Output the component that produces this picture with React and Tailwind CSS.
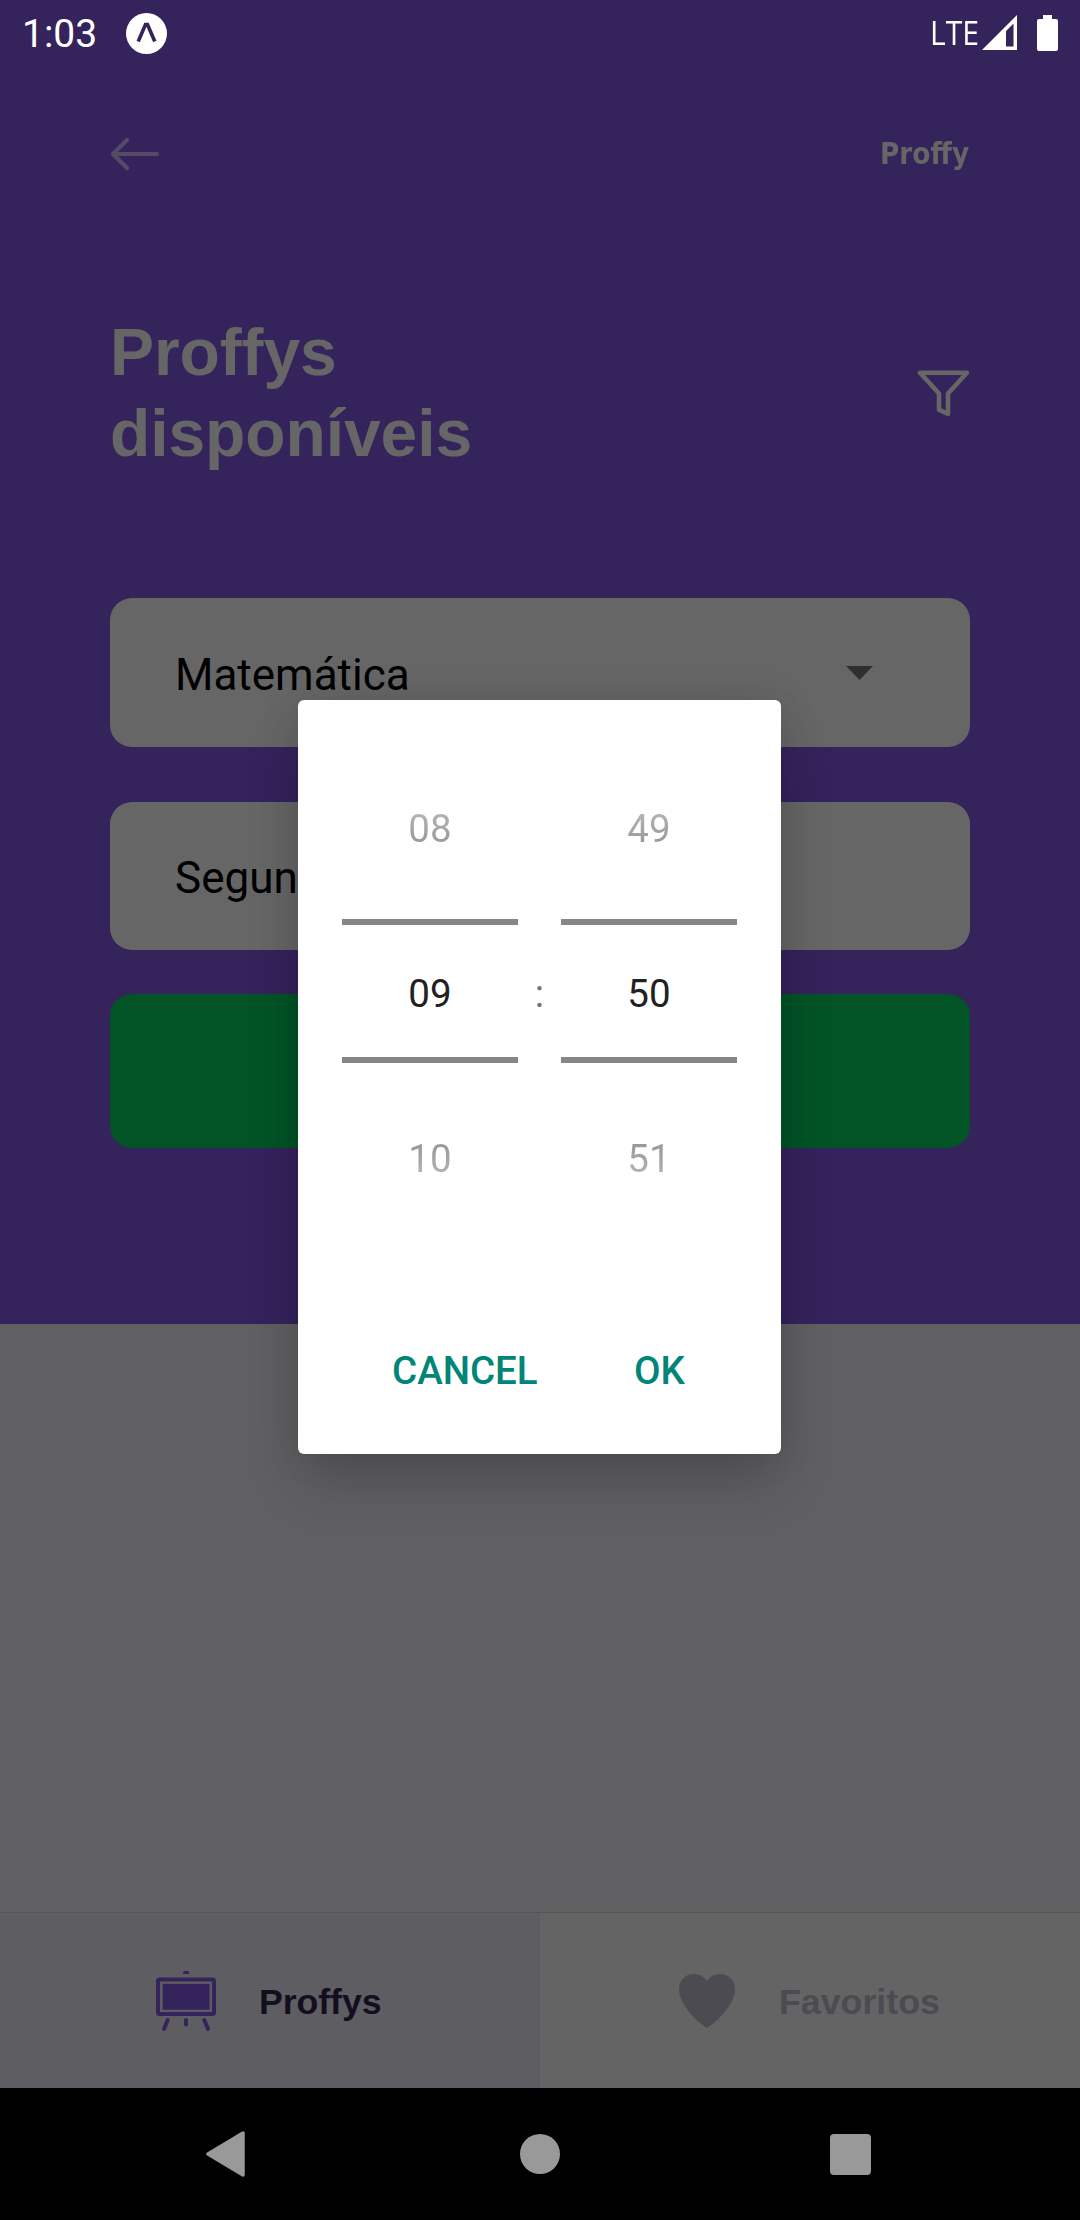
function StatusBar() {
  return (
    <div className="flex h-[66px] shrink-0 items-start justify-between pl-[22px] pr-[22px] font-['Roboto',sans-serif] text-white">
      <div className="flex items-start">
        <span className="w-[104px] text-[39px] leading-[69px]">1:03</span>
        <svg className="mt-[13px] h-[41px] w-[41px]" viewBox="0 0 41 41">
          <circle cx="20.5" cy="20.5" r="20.5" fill="white" />
          <path d="M12.2 28.5 L19.5 11.5 H21.5 L28.8 28.5" fill="none" stroke="#35235c" strokeWidth="3.6" />
        </svg>
      </div>
      <div className="flex items-start">
        <span className="mt-[9px] mr-[3px] w-[49px] origin-left scale-x-[0.9] font-['Open_Sans',sans-serif] text-[33.5px] leading-[46px]">LTE</span>
        <svg className="mt-[15px] mr-[20px] h-[35px] w-[35px]" viewBox="0 0 35 35">
          <path fillRule="evenodd" d="M0 35 L35 0 V35 Z M24 16 L31.5 8.5 V31.5 H24 Z" fill="white" />
        </svg>
        <svg className="mt-[15px] h-[36px] w-[21px]" viewBox="0 0 21 36">
          <path d="M6 0 h9 v4 h4 a2 2 0 0 1 2 2 v28 a2 2 0 0 1 -2 2 h-17 a2 2 0 0 1 -2 -2 v-28 a2 2 0 0 1 2 -2 h4 z" fill="white" />
        </svg>
      </div>
    </div>
  );
}

function Header() {
  return (
    <header className="flex h-[1324px] flex-col bg-[#35235c]">
      <StatusBar />
      <div className="mt-[64px] flex h-[48px] items-center justify-between px-[110px]">
        <svg className="h-[34px] w-[50px]" viewBox="0 0 50 34" fill="none" stroke="#564b66" strokeWidth="4.2" strokeLinecap="round" strokeLinejoin="round">
          <path d="M17 3 L3 17 L17 31 M3 17 H47" />
        </svg>
        <span className="w-[90px] origin-left scale-x-[0.88] whitespace-nowrap text-[30px] font-bold leading-[44px] text-[#666666] font-['DejaVu_Sans',sans-serif]">Proffy</span>
      </div>
      <div className="mt-[134px] flex h-[161px] items-start justify-between pl-[110px] pr-[109px]">
        <h1 className="w-[420px] font-['Liberation_Sans',sans-serif] text-[66px] font-bold leading-[81px] tracking-[-0.1px] text-[#666666]">
          Proffys disponíveis
        </h1>
        <svg className="mt-[56px] h-[50px] w-[54px]" viewBox="0 0 54 50" fill="none" stroke="#666666" strokeWidth="4.6" strokeLinejoin="round">
          <path d="M3 4.7 H50 L31 25.5 V46 L22 41.7 V25.5 Z" />
        </svg>
      </div>
      <div className="mt-[125px] flex flex-col px-[110px] font-['Roboto',sans-serif] text-[44px] text-black">
        <div className="flex h-[149px] items-center justify-between rounded-[22px] bg-[#666666] pl-[65px] pr-[97px]">
          <span className="pt-[5px] leading-[52px]">Matemática</span>
          <svg className="h-[14px] w-[27px]" viewBox="0 0 27 14">
            <path d="M0 0 H27 L13.5 14 Z" fill="#2f2f2f" />
          </svg>
        </div>
        <div className="mt-[55px] flex h-[148px] items-center rounded-[22px] bg-[#666666] pl-[65px]">
          <span className="pt-[3px] leading-[52px]">Segunda-feira</span>
        </div>
        <div className="mt-[44px] h-[154px] rounded-[22px] bg-[#025427]" />
      </div>
    </header>
  );
}

function TabBar() {
  return (
    <div className="flex h-[176px] border-t border-[#555555] font-['Liberation_Sans',sans-serif] text-[35.75px] font-bold">
      <div className="flex w-[540px] items-center bg-[#5e5e62] pl-[155px] text-[#140f1f]">
        <svg className="h-[64px] w-[62px]" viewBox="0 0 62 64" fill="none" stroke="#35235c" strokeWidth="4" strokeLinecap="round">
          <path d="M28 5 a3.2 3.2 0 0 1 6.4 0 z" fill="#35235c" stroke="none" />
          <rect x="3" y="10.5" width="56" height="34.5" rx="1.5" />
          <rect x="7.6" y="14.8" width="47" height="26" fill="#35235c" stroke="none" />
          <path d="M12.7 51 L9 60 M31 51 V55.5 M49.3 51 L53 60" />
        </svg>
        <span className="ml-[42px] pt-[3px] leading-[42px] tracking-[-0.1px]">Proffys</span>
      </div>
      <div className="flex w-[540px] items-center bg-[#646464] pl-[139px] text-[#4d4b52]">
        <svg className="h-[54px] w-[56px]" viewBox="0 0 56 54">
          <path d="M28 54 C16 46 0 30 0 15 C0 6 6.5 0 15 0 C20 0 25 2.5 28 7 C31 2.5 36 0 41 0 C49.5 0 56 6 56 15 C56 30 40 46 28 54 Z" fill="#4d4b52" />
        </svg>
        <span className="ml-[44px] pt-[3px] leading-[42px]">Favoritos</span>
      </div>
    </div>
  );
}

function NavigationBar() {
  return (
    <div className="flex h-[132px] items-center bg-black pl-[206px]">
      <svg className="h-[46px] w-[39px]" viewBox="0 0 39 46">
        <path d="M37 2 V44 L2 23 Z" fill="#999999" stroke="#999999" strokeWidth="3.5" strokeLinejoin="round" />
      </svg>
      <div className="ml-[275px] h-[40px] w-[40px] rounded-full bg-[#999999]" />
      <div className="ml-[270px] h-[41px] w-[41px] rounded-[4px] bg-[#999999]" />
    </div>
  );
}

function Wheel({ previous, current, next }) {
  return (
    <div className="flex w-[176px] flex-col">
      <div className="flex h-[173px] items-center justify-center pb-[7px]">
        <span className="bg-linear-to-b from-[#bababa] to-[#929292] bg-clip-text leading-[46px] text-transparent">{previous}</span>
      </div>
      <div className="h-[6px] bg-[#868686]" />
      <div className="flex h-[132px] items-center justify-center pt-[6px] text-[#212121]">{current}</div>
      <div className="h-[6px] bg-[#868686]" />
      <div className="flex h-[192px] items-center justify-center">
        <span className="bg-linear-to-b from-[#929292] to-[#bababa] bg-clip-text leading-[46px] text-transparent">{next}</span>
      </div>
    </div>
  );
}

function TimePicker() {
  return (
    <div className="absolute left-[298px] top-[700px] flex h-[754px] w-[483px] flex-col rounded-[6px] bg-white pt-[46px] font-['Roboto',sans-serif] text-[38.5px] leading-[46px] shadow-[0_32px_56px_-4px_rgba(0,0,0,0.18),0_0_40px_rgba(0,0,0,0.1)]">
      <div className="flex pl-[44px]">
        <Wheel previous="08" current="09" next="10" />
        <span className="w-[43px] pt-[225px] text-center text-[#757575]">:</span>
        <Wheel previous="49" current="50" next="51" />
      </div>
      <div className="mt-[83px] flex h-[66px] items-center pl-[94px] font-medium text-[#008577]">
        <button className="w-[242px] text-left">CANCEL</button>
        <button>OK</button>
      </div>
    </div>
  );
}

export default function App() {
  return (
    <div className="relative flex h-[2220px] w-[1080px] flex-col overflow-hidden bg-[#606063]">
      <Header />
      <main className="flex-1" />
      <TabBar />
      <NavigationBar />
      <TimePicker />
    </div>
  );
}
